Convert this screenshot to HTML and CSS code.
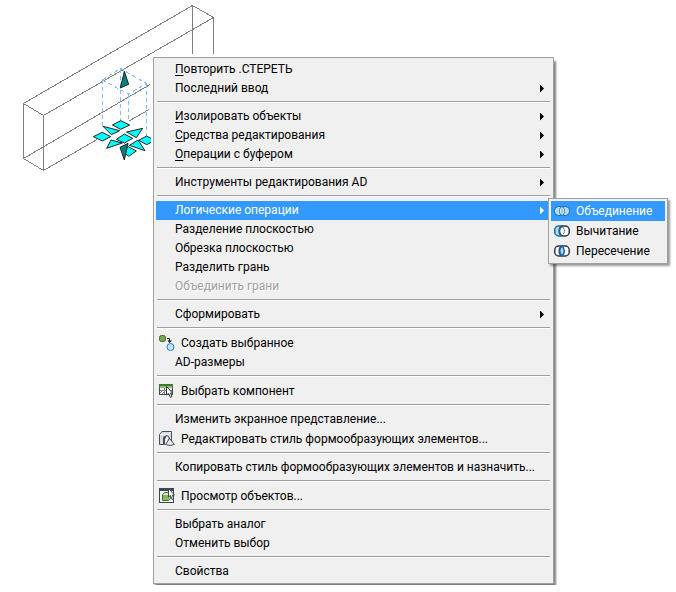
FILE: index.html
```html
<!DOCTYPE html>
<html lang="ru">
<head>
    <meta charset="UTF-8" />
    <meta name="viewport" content="width=device-width, initial-scale=1.0" />
    <title>Логические операции</title>
    <link rel="stylesheet" href="styles.css">
</head>
<body>
    <main class="workspace">
        <svg class="drawing" width="220" height="176" viewBox="0 0 220 176" aria-hidden="true">
            <g class="wire">
                <path d="M23.5 103.5L192.5 5.5L213.5 17.5L43.5 115.5Z" />
                <path d="M23.5 103.5V158.5L43.5 170.5V115.5M192.5 5.5V54M213.5 17.5V54" />
                <path d="M23.5 158.5L150 84.5M43.5 170.5L97 139.500M129 121L149 109.500" />
            </g>
            <g class="dashes">
                <path d="M102.500 80V128M120.500 69V121M128.500 94V121M146.500 84V137" />
                <path d="M102.500 80L120.500 68.500L146.500 83.500L128.500 94Z" />
            </g>
            <svg x="90" y="60" width="61" height="105" viewBox="0 0 183 315">
                <g class="grip">
                    <path d="M67 195L92 182L119 195L92 208Z" />
                    <path d="M39 199L89 212L64 224Z" />
                    <path d="M10 230L37 217L62 230L37 243Z" />
                    <path d="M158 205L110 216L139 233Z" />
                    <path d="M50 265L63 240L97 249Z" />
                    <path d="M79 238L103 222L128 235L103 249Z" />
                    <path d="M118 256L144 240L165 272Z" />
                    <path d="M146 241L170 228L195 241L170 254Z" />
                    <path d="M100 275L115 260L139 273L116 289Z" />
                </g>
                <g class="grip-dark">
                    <path d="M103 34L116 73L91 84Z" />
                    <path d="M90 262L114 250L103 300Z" />
                </g>
            </svg>
        </svg>

        <ul class="menu main-menu">
            <li><button type="button"><span><u>П</u>овторить .СТЕРЕТЬ</span></button></li>
            <li><button type="button" class="has-sub">Последний ввод</button></li>
            <li class="separator"></li>
            <li><button type="button" class="has-sub"><span><u>И</u>золировать объекты</span></button></li>
            <li><button type="button" class="has-sub"><span><u>С</u>редства редактирования</span></button></li>
            <li><button type="button" class="has-sub"><span><u>О</u>перации с буфером</span></button></li>
            <li class="separator"></li>
            <li><button type="button" class="has-sub">Инструменты редактирования AD</button></li>
            <li class="separator"></li>
            <li class="open">
                <button type="button" class="has-sub active">Логические операции</button>
                <ul class="menu submenu">
                    <li>
                        <button type="button" class="with-icon active">
                            <svg class="icon" viewBox="0 0 16 16" aria-hidden="true">
                                <rect x="0.500" y="3.500" width="10" height="9" rx="4" fill="#b5dcf5" />
                                <rect x="5.500" y="3.500" width="10" height="9" rx="4" fill="#b5dcf5" />
                                <rect x="0.500" y="3.500" width="10" height="9" rx="4" fill="none" stroke="#1769a8" />
                                <rect x="5.500" y="3.500" width="10" height="9" rx="4" fill="none" stroke="#1769a8" />
                                <path d="M8 4.500Q4.500 8 8 11.500Q11.500 8 8 4.500" fill="#8bc4ea" stroke="#e4f3fd" />
                            </svg>
                            Объединение
                        </button>
                    </li>
                    <li>
                        <button type="button" class="with-icon">
                            <svg class="icon" viewBox="0 0 16 16" aria-hidden="true">
                                <rect x="0.750" y="3" width="10" height="10" rx="4" fill="#b5dcf5" stroke="#1769a8" stroke-width="1.500" />
                                <rect x="5.250" y="3" width="10" height="10" rx="4" fill="#fff" stroke="#303844" stroke-width="1.500" />
                                <path d="M7.500 3.500Q3.500 8 7.500 12.500" fill="none" stroke="#1769a8" stroke-width="1.500" />
                                <path d="M8.500 4Q12.500 8 8.500 12" fill="none" stroke="#303844" stroke-dasharray="2 1" />
                            </svg>
                            Вычитание
                        </button>
                    </li>
                    <li>
                        <button type="button" class="with-icon">
                            <svg class="icon" viewBox="0 0 16 16" aria-hidden="true">
                                <rect x="0.750" y="3" width="10" height="10" rx="4" fill="#fff" stroke="#303844" stroke-width="1.500" />
                                <rect x="5.250" y="3" width="10" height="10" rx="4" fill="#fff" stroke="#303844" stroke-width="1.500" />
                                <path d="M8 3Q3.500 8 8 13Q12.500 8 8 3" fill="#b5dcf5" stroke="#1769a8" stroke-width="1.500" />
                            </svg>
                            Пересечение
                        </button>
                    </li>
                </ul>
            </li>
            <li><button type="button">Разделение плоскостью</button></li>
            <li><button type="button">Обрезка плоскостью</button></li>
            <li><button type="button">Разделить грань</button></li>
            <li><button type="button" disabled>Объединить грани</button></li>
            <li class="separator"></li>
            <li><button type="button" class="has-sub">Сформировать</button></li>
            <li class="separator"></li>
            <li>
                <button type="button" class="with-icon">
                    <svg class="icon" viewBox="0 0 16 16" aria-hidden="true">
                        <rect x="0.500" y="0.500" width="6" height="6" rx="2" fill="#79a957" stroke="#3d6e2b" />
                        <path d="M8 3.500H10.500V6" fill="none" stroke="#111" />
                        <path d="M8.500 5.500H13L10.500 8Z" fill="#111" />
                        <circle cx="11.500" cy="12" r="3.500" fill="#c2e3fa" stroke="#247fc0" />
                    </svg>
                    Создать выбранное
                </button>
            </li>
            <li><button type="button">AD-размеры</button></li>
            <li class="separator"></li>
            <li>
                <button type="button" class="with-icon">
                    <svg class="icon" viewBox="0 0 16 16" aria-hidden="true">
                        <rect x="0.500" y="1.500" width="13" height="10" fill="#f2f2f2" stroke="#444b50" />
                        <path d="M0 1H14V5H0Z" fill="#3d7a32" />
                        <path d="M1 3H13V5H1Z" fill="#8fbd6d" />
                        <path d="M1 7.500H13M5.500 5V11M1 10L4 7M3 11L6 8" stroke="#7b8287" fill="none" />
                        <path d="M7.500 3.500V12L9.500 10.500L11.500 14.500L13 13.500L11.500 10H13.500Z" fill="#fff" stroke="#303740" />
                    </svg>
                    Выбрать компонент
                </button>
            </li>
            <li class="separator"></li>
            <li><button type="button">Изменить экранное представление...</button></li>
            <li>
                <button type="button" class="with-icon">
                    <svg class="icon" viewBox="0 0 16 16" aria-hidden="true">
                        <path d="M0.500 3.500L3 0.500H12.500V10L10 12.500V6Q8 3 5.500 6V13.500H0.500Z" fill="#d5dbe0" stroke="#454f5a" />
                        <path d="M1 3.500H9.500L12 1" fill="none" stroke="#fff" />
                        <path d="M4 13V7Q4.500 4.500 8 4.500L5.500 9V13Z" fill="#454f5a" />
                        <path d="M10.500 7.500L15.500 13.500Q11 15.500 6.500 13.500Z" fill="#e8ecef" stroke="#454f5a" />
                    </svg>
                    Редактировать стиль формообразующих элементов...
                </button>
            </li>
            <li class="separator"></li>
            <li><button type="button">Копировать стиль формообразующих элементов и назначить...</button></li>
            <li class="separator"></li>
            <li>
                <button type="button" class="with-icon">
                    <svg class="icon" viewBox="0 0 16 16" aria-hidden="true">
                        <rect x="0.500" y="0.500" width="14" height="14" fill="#f4f4f4" stroke="#3b4650" />
                        <path d="M0 0H15V3H0Z" fill="#3b4650" />
                        <path d="M3.500 7L5.500 4.500H11.500V10L9.500 12.500H3.500Z" fill="#d9edcb" stroke="#34782c" />
                        <rect x="4" y="7" width="6" height="5" fill="#86b960" />
                        <path d="M9.500 0.500V9L11.500 7.500L13 11.500L14.500 10.500L13.500 7H15.500Z" fill="#fff" stroke="#3b4650" />
                    </svg>
                    Просмотр объектов...
                </button>
            </li>
            <li class="separator"></li>
            <li><button type="button">Выбрать аналог</button></li>
            <li><button type="button">Отменить выбор</button></li>
            <li class="separator"></li>
            <li><button type="button">Свойства</button></li>
        </ul>
    </main>
</body>
</html>
```
FILE: styles.css
```css
body {
    margin: 0;
    background-color: #fff;
    font-family: Roboto, "Open Sans", sans-serif;
    font-size: 12px;
}
.workspace {
    position: relative;
    padding: 57px 122px 7px 153px;
}
.drawing {
    position: absolute;
    left: 0;
    top: 0;
}
.wire {
    fill: none;
    stroke: #808080;
    shape-rendering: crispEdges;
}
.dashes {
    fill: none;
    stroke: #80bfff;
    stroke-dasharray: 4 3;
    shape-rendering: crispEdges;
}
.grip {
    fill: #00ffff;
    stroke: #222;
    stroke-width: 3px;
}
.grip-dark {
    fill: #008080;
    stroke: #222;
    stroke-width: 3px;
}
.menu {
    list-style: none;
    margin: 0;
    padding: 2px;
    background-color: #f0f0f0;
    border: 1px solid #a0a0a0;
    box-shadow: 2px 4px 2px rgba(0,0,0,0.5);
}
.main-menu {
    position: relative;
    /* keeps the shadow to the right side, leaves room for the submenu */
    clip-path: inset(0 -122px -1px 0);
}
.menu button {
    display: flex;
    align-items: center;
    width: 100%;
    height: 19px;
    padding: 0 7px 0 19px;
    border: none;
    background: none;
    color: #000;
    font: inherit;
    line-height: 19px;
    text-align: left;
    white-space: nowrap;
}
.menu button.with-icon {
    height: 20px;
    padding-left: 3px;
    gap: 6px;
}
.menu button.active {
    background-color: #3399ff;
    color: #fff;
}
.menu button:disabled {
    color: #a0a0a0;
    text-shadow: 1px 1px 0 #fff;
}
.menu u {
    text-underline-offset: 2px;
}
.has-sub::after {
    content: "";
    width: 4px;
    height: 8px;
    margin-left: auto;
    background-color: currentColor;
    clip-path: polygon(0 0, 100% 50%, 0 100%);
}
.icon {
    width: 16px;
    height: 16px;
    flex-shrink: 0;
}
.separator {
    height: 1px;
    margin: 3px 1px 4px;
    border-top: 1px solid #a0a0a0;
    background-color: #fff;
}
.open {
    position: relative;
}
.menu.submenu {
    position: absolute;
    left: calc(100% - 3px);
    top: -3px;
    width: 114px;
    box-shadow: 2px 2px 2px rgba(0,0,0,0.4);
}
```
